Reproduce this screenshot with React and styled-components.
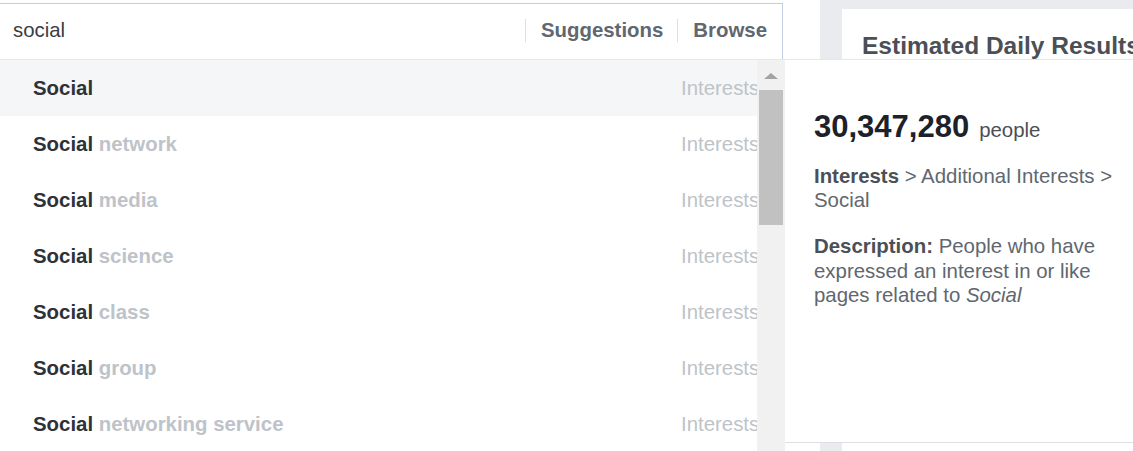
import React from "react";
import styled, { createGlobalStyle } from "styled-components";

const Global = createGlobalStyle`
  html, body {
    margin: 0;
    padding: 0;
    background: #ffffff;
    overflow: hidden;
  }
  body {
    font-family: "Liberation Sans", Arial, Helvetica, sans-serif;
    -webkit-font-smoothing: antialiased;
  }
`;

const Page = styled.div`
  position: relative;
  display: flex;
  width: 1133px;
  height: 451px;
  overflow: hidden;
  background: #ffffff;
`;

const LeftColumn = styled.div`
  width: 820px;
  flex-shrink: 0;
  padding-top: 3px;
  background: #ffffff;
`;

const SearchBox = styled.div`
  box-sizing: border-box;
  width: 783px;
  height: 57px;
  display: flex;
  align-items: center;
  padding: 0 0 3px 13px;
  border-top: 1px solid #c4cde0;
  border-right: 1px solid #c4cde0;
  background: #ffffff;
`;

const Query = styled.div`
  flex: 1;
  font-size: 20.4px;
  color: #3a3d42;
`;

const Tabs = styled.div`
  display: flex;
  align-items: center;
`;

const Tab = styled.div`
  padding: 0 ${(p) => (p.$last ? "15px" : "14px")} 0 15px;
  border-left: 1px solid #dddfe2;
  line-height: 23px;
  font-size: 20.4px;
  font-weight: bold;
  color: #606770;
`;

const SideColumn = styled.div`
  flex: 1;
  background: #e9ebee;
  padding: 9px 0 0 22px;
`;

const Card = styled.div`
  height: 100%;
  background: #ffffff;
  padding: 23px 20px;
  box-sizing: border-box;
  white-space: nowrap;
`;

const CardTitle = styled.div`
  font-size: 24.5px;
  font-weight: bold;
  color: #4b4f56;
`;

const Dropdown = styled.div`
  position: absolute;
  top: 59px;
  left: 0;
  width: 1173px;
  display: flex;
  align-items: flex-start;
  border-top: 1px solid #e5e7ea;
  box-shadow: 0 1px 3px rgba(0, 0, 0, 0.06);
`;

const ListArea = styled.div`
  display: flex;
  background: #ffffff;
`;

const List = styled.div`
  width: 757px;
  overflow: hidden;
`;

const Row = styled.div`
  height: 56px;
  display: grid;
  grid-template-columns: 1fr 76px;
  align-items: center;
  padding-left: 33px;
  background: ${(p) => (p.$active ? "#f5f6f7" : "#ffffff")};
  font-size: 20.4px;
`;

const Name = styled.div`
  font-weight: bold;
  color: #2d323a;
  white-space: nowrap;
`;

const Rest = styled.span`
  color: #bec3c9;
`;

const Category = styled.div`
  overflow: hidden;
  white-space: nowrap;
  color: #bec3c9;
`;

const Scrollbar = styled.div`
  width: 28px;
  height: 400px;
  background: #f1f1f1;
  display: flex;
  flex-direction: column;
  align-items: center;
  padding-top: 13px;
  box-sizing: border-box;
`;

const Arrow = styled.div`
  width: 0;
  height: 0;
  border-left: 7px solid transparent;
  border-right: 7px solid transparent;
  border-bottom: 6px solid #a3a3a3;
`;

const Thumb = styled.div`
  margin-top: 11px;
  width: 24px;
  height: 135px;
  background: #c1c1c1;
`;

const Detail = styled.div`
  box-sizing: border-box;
  width: 388px;
  height: 383px;
  background: #ffffff;
  border-bottom: 1px solid #dddfe2;
  padding: 49px 29px 0 29px;
`;

const Audience = styled.div`
  display: flex;
  align-items: baseline;
  gap: 10px;
  line-height: 36px;
  margin-bottom: 15.5px;
  color: #1d2129;
  white-space: nowrap;
`;

const Count = styled.span`
  font-size: 31px;
  font-weight: bold;
`;

const Unit = styled.span`
  font-size: 20.4px;
  color: #4b4f56;
`;

const Para = styled.p`
  margin: 0 0 21.5px 0;
  font-size: 20.4px;
  line-height: 24.5px;
  color: #606770;
`;

const Strong = styled.b`
  color: #4b4f56;
`;

const rows = [
  ["Social", ""],
  ["Social", "network"],
  ["Social", "media"],
  ["Social", "science"],
  ["Social", "class"],
  ["Social", "group"],
  ["Social", "networking service"],
];

export default function App() {
  return (
    <>
      <Global />
      <Page>
        <LeftColumn>
          <SearchBox>
            <Query>social</Query>
            <Tabs>
              <Tab>Suggestions</Tab>
              <Tab $last>Browse</Tab>
            </Tabs>
          </SearchBox>
        </LeftColumn>
        <SideColumn>
          <Card>
            <CardTitle>Estimated Daily Results</CardTitle>
          </Card>
        </SideColumn>
        <Dropdown>
          <ListArea>
            <List>
              {rows.map(([a, b], i) => (
                <Row key={i} $active={i === 0}>
                  <Name>
                    {a}
                    {b && <Rest> {b}</Rest>}
                  </Name>
                  <Category>Interests</Category>
                </Row>
              ))}
            </List>
            <Scrollbar>
              <Arrow />
              <Thumb />
            </Scrollbar>
          </ListArea>
          <Detail>
            <Audience>
              <Count>30,347,280</Count>
              <Unit>people</Unit>
            </Audience>
            <Para>
              <Strong>Interests</Strong> &gt; Additional Interests &gt; Social
            </Para>
            <Para>
              <Strong>Description:</Strong> People who have expressed an
              interest in or like pages related to <i>Social</i>
            </Para>
          </Detail>
        </Dropdown>
      </Page>
    </>
  );
}
